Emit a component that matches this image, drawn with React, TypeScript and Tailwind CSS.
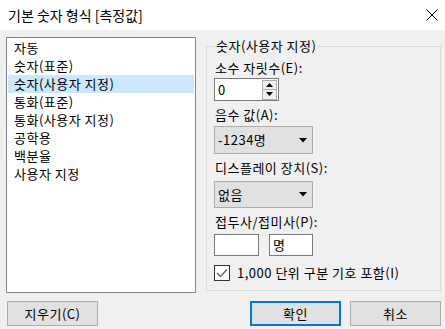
const items = ['자동', '숫자(표준)', '숫자(사용자 지정)', '통화(표준)', '통화(사용자 지정)', '공학용', '백분율', '사용자 지정']

function Arrow() {
  return (
    <svg width="8" height="5" viewBox="0 0 8 5" className="shrink-0">
      <path d="M0 0H8L4 4.5Z" fill="#000" />
    </svg>
  )
}

function Dropdown({ value, className }: { value: string; className: string }) {
  return (
    <div className={`w-[99px] flex items-center justify-between bg-[#e1e1e1] border border-[#adadad] pl-[3px] pr-[5px] ${className}`}>
      <span>{value}</span>
      <Arrow />
    </div>
  )
}

export default function App() {
  return (
    <div
      className="w-[445px] h-[329px] bg-[#f0f0f0] flex flex-col text-[13px] tracking-[0.5px] text-black leading-[18px]"
      style={{ fontFamily: '"Malgun Gothic", "Noto Sans CJK KR", sans-serif' }}
    >
      <div className="h-[30px] bg-white flex items-center justify-between pl-2 pr-[7px] text-[14px] tracking-normal">
        <span>기본 숫자 형식 [측정값]</span>
        <svg width="12" height="12" viewBox="0 0 12 12">
          <path d="M0.5 0.5L11.5 11.5M11.5 0.5L0.5 11.5" stroke="#000" strokeWidth="1" />
        </svg>
      </div>

      <div className="flex pl-[6px] pt-[7px] gap-[10px]">
        <div className="w-[190px] h-[256px] border border-[#828790] bg-white p-px">
          {items.map((it, i) => (
            <div key={it} className={`h-[18px] pl-[6px] ${i === 2 ? 'bg-[#cce8ff]' : ''}`}>
              {it}
            </div>
          ))}
        </div>

        <fieldset className="w-[235px] h-[254px] border border-[#dcdcdc] pl-[7px]">
          <legend className="ml-[1px] px-[1px]">숫자(사용자 지정)</legend>
          <div className="flex flex-col items-start">
            <div className="mt-[4px] ml-px">소수 자릿수(E):</div>
            <div className="mt-px w-[65px] h-[23px] border border-[#7a7a7a] bg-white flex items-center justify-between pl-[3px] pr-px">
              <span>0</span>
              <div className="w-[15px] h-[20px] flex flex-col border border-[#adadad] bg-[#f0f0f0]">
                <div className="flex-1 flex items-center justify-center border-b border-[#adadad]">
                  <svg width="7" height="4" viewBox="0 0 7 4"><path d="M0 4H7L3.5 0Z" fill="#000" /></svg>
                </div>
                <div className="flex-1 flex items-center justify-center">
                  <svg width="7" height="4" viewBox="0 0 7 4"><path d="M0 0H7L3.5 4Z" fill="#000" /></svg>
                </div>
              </div>
            </div>

            <div className="mt-[5px] ml-px">음수 값(A):</div>
            <Dropdown value="-1234명" className="mt-[2px] h-[28px]" />

            <div className="mt-[5px] ml-px">디스플레이 장치(S):</div>
            <Dropdown value="없음" className="mt-[4px] h-[27px]" />

            <div className="mt-[5px] ml-px">접두사/접미사(P):</div>
            <div className="mt-[3px] flex gap-[10px]">
              <div className="w-[45px] h-[22px] border border-[#7a7a7a] bg-white" />
              <div className="w-[44px] h-[22px] border border-[#7a7a7a] bg-white pl-[3px] flex items-center">명</div>
            </div>

            <div className="mt-[8px] flex items-center gap-[7px]">
              <div className="w-[16px] h-[16px] border border-[#333] bg-white flex items-center justify-center">
                <svg width="12" height="10" viewBox="0 0 12 10">
                  <path d="M1 5L4.5 8.5L11 1.5" stroke="#555" strokeWidth="1.2" fill="none" />
                </svg>
              </div>
              <span>1,000 단위 구분 기호 포함(I)</span>
            </div>
          </div>
        </fieldset>
      </div>

      <div className="flex mt-[8px] pl-[7px] pr-[4px]">
        <button className="w-[91px] h-[25px] bg-[#e1e1e1] border border-[#adadad]">지우기(C)</button>
        <button className="ml-auto w-[91px] h-[25px] bg-[#e1e1e1] border-2 border-[#0078d7]">확인</button>
        <button className="ml-[9px] w-[91px] h-[25px] bg-[#e1e1e1] border border-[#adadad]">취소</button>
      </div>
    </div>
  )
}
